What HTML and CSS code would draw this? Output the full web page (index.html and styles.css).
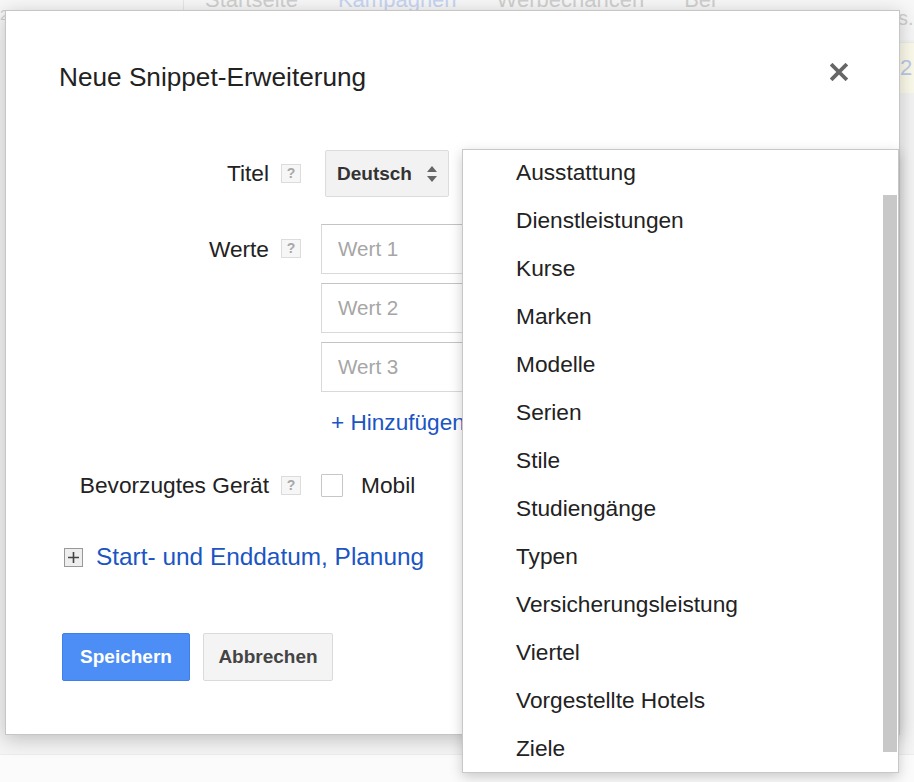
FILE: index.html
```html
<!DOCTYPE html>
<html lang="de">
<head>
  <meta charset="UTF-8">
  <meta name="viewport" content="width=device-width, initial-scale=1.0">
  <title>Neue Snippet-Erweiterung</title>
  <link rel="stylesheet" href="styles.css">
</head>
<body>

  <div class="page">
    <div class="topnav">
      <div class="account">2 230 0251 <span class="caret">&#9662;</span></div>
      <div class="tabs">
        <span>Startseite</span>
        <span class="active">Kampagnen</span>
        <span>Werbechancen</span>
        <span>Bei</span>
      </div>
      <div class="tools">s.</div>
    </div>
    <div class="content">
      <div class="notice">2</div>
    </div>
  </div>

  <div class="dialog">
    <div class="dialog-head">
      <h2>Neue Snippet-Erweiterung</h2>
      <button class="close" aria-label="Schließen">
        <svg width="18" height="18" viewBox="0 0 18 18">
          <path d="M2.5 2.5 L15.5 15.5 M15.5 2.5 L2.5 15.5" stroke="#666" stroke-width="3.8" stroke-linecap="square"/>
        </svg>
      </button>
    </div>

    <div class="form">
      <div class="row row-title">
        <label class="lbl">Titel</label>
        <span class="help">?</span>
        <button class="select">Deutsch
          <svg width="12" height="20" viewBox="0 0 12 20">
            <path d="M6 2 L11 8 H1 Z M6 18 L11 12 H1 Z" fill="#666"/>
          </svg>
        </button>
      </div>

      <div class="row row-values">
        <label class="lbl">Werte</label>
        <span class="help">?</span>
        <div class="values">
          <input type="text" placeholder="Wert 1">
          <input type="text" placeholder="Wert 2">
          <input type="text" placeholder="Wert 3">
          <a class="add" href="#">+ Hinzufügen</a>
        </div>
      </div>

      <div class="row row-device">
        <label class="lbl">Bevorzugtes Gerät</label>
        <span class="help">?</span>
        <span class="checkbox"></span>
        <span class="check-label">Mobil</span>
      </div>
    </div>

    <div class="more">
      <span class="expand">
        <svg width="19" height="19" viewBox="0 0 19 19">
          <rect x="0.5" y="0.5" width="18" height="18" fill="#eee" stroke="#999"/>
          <path d="M4 9.5 H15 M9.5 4 V15" stroke="#444" stroke-width="1.6"/>
        </svg>
      </span>
      <a href="#">Start- und Enddatum, Planung</a>
    </div>

    <div class="actions">
      <button class="btn primary">Speichern</button>
      <button class="btn">Abbrechen</button>
    </div>

    <div class="menu">
      <ul>
        <li>Ausstattung</li>
        <li>Dienstleistungen</li>
        <li>Kurse</li>
        <li>Marken</li>
        <li>Modelle</li>
        <li>Serien</li>
        <li>Stile</li>
        <li>Studiengänge</li>
        <li>Typen</li>
        <li>Versicherungsleistung</li>
        <li>Viertel</li>
        <li>Vorgestellte Hotels</li>
        <li>Ziele</li>
      </ul>
      <div class="thumb"></div>
    </div>
  </div>

</body>
</html>
```

FILE: styles.css
```css
body {
  margin: 0;
  font-family: "Liberation Sans", Arial, sans-serif;
  background-color: #fbfbfb;
  color: #222;
  overflow: hidden;
}

/* faded page behind the dialog */
.page {
  color: #cfcfcf;
}

.topnav {
  height: 40px;
  display: flex;
  align-items: flex-start;
  background-color: #f7f7f7;
  font-size: 22px;
}

.account {
  width: 183px;
  padding-top: 6px;
  font-size: 15px;
  line-height: 18px;
  border-right: 1px solid #e6e6e6;
  height: 14px;
  overflow: hidden;
  white-space: nowrap;
}

.caret {
  margin-left: 60px;
  color: #d6d6d6;
}

.tabs {
  display: flex;
  gap: 40px;
  margin-left: 21px;
  margin-top: -13px;
  line-height: 26px;
}

.tabs .active {
  color: #c6d4f2;
}

.tools {
  margin-left: auto;
  margin-top: 8px;
  font-size: 20px;
  line-height: 20px;
  width: 16px;
}

.content {
  height: 714px;
  background-color: #f4f4f4;
  border-bottom: 1px solid #ececec;
  display: flex;
  justify-content: flex-end;
  align-items: flex-start;
}

.notice {
  width: 14px;
  height: 50px;
  margin-top: 2px;
  padding-left: 6px;
  background-color: #fcfbeb;
  color: #bccaea;
  font-size: 22px;
  line-height: 50px;
  border-top: 1px solid #ededed;
  border-left: 1px solid #ededed;
  overflow: hidden;
}

/* dialog */
.dialog {
  position: absolute;
  left: 5px;
  top: 10px;
  width: 895px;
  height: 725px;
  box-sizing: border-box;
  background: #fff;
  border: 1px solid #c6c6c6;
  box-shadow: 0 4px 18px rgba(0, 0, 0, 0.22);
  padding: 51px 51px 0 53px;
}

.dialog-head {
  display: flex;
  justify-content: space-between;
  align-items: flex-start;
}

.dialog-head h2 {
  margin: 0;
  font-size: 26.2px;
  line-height: 30px;
  font-weight: normal;
  color: #222;
}

.close {
  margin-top: 1px;
  padding: 0;
  border: none;
  background: none;
  width: 18px;
  height: 18px;
  cursor: pointer;
}

.form {
  margin-top: 58px;
}

.row {
  display: flex;
  align-items: center;
}

.lbl {
  width: 210px;
  text-align: right;
  font-size: 22.7px;
  color: #222;
  white-space: nowrap;
}

.help {
  width: 18px;
  height: 17px;
  margin: 0 20px 0 12px;
  border: 1px solid #dcdcdc;
  background-color: #f6f6f6;
  color: #a8a8a8;
  font-size: 14px;
  font-weight: bold;
  line-height: 17px;
  text-align: center;
  flex-shrink: 0;
}

.row-title {
  height: 47px;
}

.select {
  margin-left: 4px;
  width: 124px;
  height: 47px;
  box-sizing: border-box;
  padding: 0 10px 0 11px;
  display: flex;
  align-items: center;
  justify-content: space-between;
  font-family: inherit;
  font-size: 19px;
  font-weight: bold;
  color: #333;
  background-color: #f2f2f2;
  border: 1px solid #dcdcdc;
  border-radius: 2px;
}

.row-values {
  margin-top: 27px;
  align-items: flex-start;
}

.row-values .lbl {
  line-height: 50px;
}

.row-values .help {
  margin-top: 15px;
}

.values {
  width: 320px;
  display: flex;
  flex-direction: column;
  gap: 9px;
}

.values input {
  height: 50px;
  box-sizing: border-box;
  padding: 0 16px;
  border: 1px solid #d9d9d9;
  border-top-color: #c4c4c4;
  font-family: inherit;
  font-size: 20.6px;
  color: #222;
}

.values input::placeholder {
  color: #a6a6a6;
}

.add {
  margin: 10px 0 0 10px;
  font-size: 22.6px;
  line-height: 24px;
  color: #1a55c4;
  text-decoration: none;
}

.row-device {
  margin-top: 35px;
  height: 30px;
}

.checkbox {
  width: 20px;
  height: 21px;
  border: 1px solid #c6c6c6;
  background: #fff;
  border-radius: 1px;
}

.check-label {
  margin-left: 18px;
  font-size: 22.7px;
}

.more {
  margin-top: 42px;
  height: 30px;
  display: flex;
  align-items: center;
  gap: 13px;
  padding-left: 5px;
}

.expand {
  display: flex;
}

.more a {
  font-size: 24.4px;
  color: #1a55c4;
  text-decoration: none;
}

.actions {
  margin-top: 61px;
  padding-left: 3px;
  display: flex;
  gap: 13px;
}

.btn {
  height: 48px;
  width: 130px;
  font-family: inherit;
  font-size: 19px;
  font-weight: bold;
  color: #444;
  background-color: #f4f4f4;
  border: 1px solid #dadada;
  border-radius: 2px;
  cursor: pointer;
}

.btn.primary {
  width: 128px;
  color: #fff;
  background-color: #4d8ef6;
  border-color: #3f7fe8;
}

/* open list of the title select */
.menu {
  position: absolute;
  left: 456px;
  top: 138px;
  width: 437px;
  height: 624px;
  box-sizing: border-box;
  background: #fff;
  border: 1px solid #c8c8c8;
  box-shadow: 0 4px 12px rgba(0, 0, 0, 0.2);
  overflow: hidden;
  z-index: 10;
}

.menu ul {
  list-style: none;
  margin: -2px 0 0;
  padding: 0 0 0 53px;
}

.menu li {
  height: 48px;
  line-height: 48px;
  font-size: 22.7px;
  color: #222;
}

.thumb {
  position: absolute;
  right: 1px;
  top: 45px;
  width: 14px;
  height: 557px;
  background-color: #c8c8c8;
}
```
